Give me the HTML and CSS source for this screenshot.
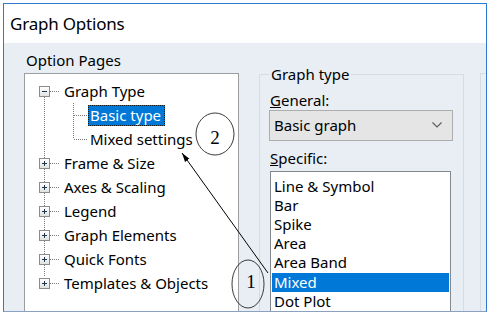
FILE: index.html
```html
<!DOCTYPE html>
<html lang="en">
<head>
  <meta charset="UTF-8" />
  <meta name="viewport" content="width=device-width, initial-scale=1.0" />
  <title>Graph Options</title>
  <link rel="stylesheet" href="styles.css">
</head>
<body>
  <div class="window">
    <div class="titlebar">Graph Options</div>
    <div class="content">
      <div class="pages">
        <p class="label">Option Pages</p>
        <div class="tree">
          <ul class="tree-root">
            <li>
              <div class="node"><span class="expander"></span><span class="dots"></span><span class="text">Graph Type</span></div>
              <ul class="tree-children">
                <li class="node"><span class="dots child"></span><span class="text selected">Basic type</span></li>
                <li class="node"><span class="dots child"></span><span class="text">Mixed settings</span></li>
              </ul>
            </li>
            <li class="node"><span class="expander closed"></span><span class="dots"></span><span class="text">Frame &amp; Size</span></li>
            <li class="node"><span class="expander closed"></span><span class="dots"></span><span class="text">Axes &amp; Scaling</span></li>
            <li class="node"><span class="expander closed"></span><span class="dots"></span><span class="text">Legend</span></li>
            <li class="node"><span class="expander closed"></span><span class="dots"></span><span class="text">Graph Elements</span></li>
            <li class="node"><span class="expander closed"></span><span class="dots"></span><span class="text">Quick Fonts</span></li>
            <li class="node"><span class="expander closed"></span><span class="dots"></span><span class="text">Templates &amp; Objects</span></li>
          </ul>
        </div>
      </div>

      <fieldset class="group">
        <legend>Graph type</legend>
        <p class="field-label"><u>G</u>eneral:</p>
        <div class="combo">
          <span>Basic graph</span>
          <svg class="chevron" width="10" height="6" viewBox="0 0 10 6">
            <path d="M0.5 0.5 L5 5 L9.5 0.5" fill="none" stroke="#5a5a5a" stroke-width="1.1"/>
          </svg>
        </div>
        <p class="field-label specific"><u>S</u>pecific:</p>
        <ul class="list">
          <li>Line &amp; Symbol</li>
          <li>Bar</li>
          <li>Spike</li>
          <li>Area</li>
          <li>Area Band</li>
          <li class="selected">Mixed</li>
          <li>Dot Plot</li>
        </ul>
      </fieldset>

      <div class="next-box"></div>
    </div>
  </div>

  <!-- annotations drawn on top of the dialog -->
  <svg class="notes" width="490" height="315" viewBox="0 0 490 315">
    <defs>
      <marker id="head" viewBox="0 0 10 10" refX="10" refY="5" markerWidth="9" markerHeight="9" orient="auto">
        <path d="M0 2 L10 5 L0 8 z" fill="#000"/>
      </marker>
    </defs>
    <line x1="268" y1="273" x2="182" y2="153" stroke="#000" stroke-width="1" marker-end="url(#head)"/>
    <ellipse cx="215" cy="134" rx="19" ry="21" fill="none" stroke="#3a3a3a" stroke-width="1"/>
    <text class="note-num" x="215" y="144" text-anchor="middle">2</text>
    <ellipse cx="248" cy="284" rx="16" ry="24" fill="none" stroke="#3a3a3a" stroke-width="1"/>
    <text class="note-num" x="251" y="288" text-anchor="middle">1</text>
  </svg>
</body>
</html>
```

FILE: styles.css
```css
:root {
  --rand: #2f7ad0;
  --hinten: #e9eef5;
  --auswahl: #0078d7;
  --linie: #7a7a7a;
}

* {
  box-sizing: border-box;
}

body {
  margin: 0;
  background: #fff;
  font-family: 'Noto Sans', 'Open Sans', sans-serif;
  font-size: 15px;
  color: #000;
}

p, ul {
  margin: 0;
  padding: 0;
  list-style: none;
}

.window {
  margin: 3px 3px 0 3px;
  height: 309px;
  border: 1px solid var(--rand);
  border-bottom-color: #8aa1c1;
  display: flex;
  flex-direction: column;
}

.titlebar {
  height: 39px;
  line-height: 39px;
  padding-left: 6px;
  font-size: 17px;
  letter-spacing: -0.2px;
  background: #fff;
}

.content {
  flex: 1;
  display: flex;
  background: var(--hinten);
  padding: 7px 0 0 20px;
  overflow: hidden;
}

/* linke Seite: Baum */
.pages {
  width: 215px;
  display: flex;
  flex-direction: column;
}

.label {
  margin: 0 0 3px 2px;
  line-height: 20px;
}

.tree {
  flex: 1;
  background: #fff;
  border: 1px solid #9a9da2;
  border-bottom: 0;
  padding-top: 5px;
}

.tree-root {
  padding-left: 14px;
  background: repeating-linear-gradient(to bottom, var(--linie) 0 1px, transparent 1px 2px) 19px 18px / 1px 180px no-repeat;
}

.tree-children {
  padding-left: 35px;
  background: repeating-linear-gradient(to bottom, var(--linie) 0 1px, transparent 1px 2px) 34px 0 / 1px 36px no-repeat;
}

.node {
  display: flex;
  align-items: center;
  height: 24px;
}

.expander {
  width: 11px;
  height: 11px;
  border: 1px solid #8c8c8c;
  background:
    linear-gradient(#1f3550, #1f3550) center / 5px 1px no-repeat,
    linear-gradient(#fff, #e2e2e2);
}

.expander.closed {
  background:
    linear-gradient(#1f3550, #1f3550) center / 5px 1px no-repeat,
    linear-gradient(#1f3550, #1f3550) center / 1px 5px no-repeat,
    linear-gradient(#fff, #e2e2e2);
}

.dots {
  width: 10px;
  height: 1px;
  margin-right: 2px;
  background: repeating-linear-gradient(to right, var(--linie) 0 1px, transparent 1px 2px);
}

.dots.child {
  width: 14px;
  margin-right: 0;
}

.text {
  line-height: 19px;
  padding: 0 1px;
  border: 1px solid transparent;
  white-space: nowrap;
}

.tree-children .text {
  padding: 0 3px 0 1px;
}

.text.selected {
  background: var(--auswahl);
  color: #fff;
  border: 1px dotted #1a1a1a;
}

/* rechte Seite: Gruppe */
.group {
  width: 205px;
  margin: 16px 0 0 20px;
  padding: 0 10px 0 9px;
  border: 1px solid #d6dce3;
  border-bottom: 0;
  display: flex;
  flex-direction: column;
  min-width: 0;
}

.group legend {
  padding: 0 2px;
  line-height: 16px;
}

.field-label {
  margin: 8px 0 0 1px;
  line-height: 20px;
}

.field-label.specific {
  margin-top: 7px;
}

.combo {
  width: 184px;
  height: 31px;
  border: 1px solid #adadad;
  background: #e5e5e5;
  display: flex;
  align-items: center;
  justify-content: space-between;
  padding: 0 10px 0 4px;
}

.list {
  flex: 1;
  width: 181px;
  margin: 3px 0 0 1px;
  padding-top: 5px;
  border: 1px solid #828790;
  border-bottom: 0;
  background: #fff;
}

.list li {
  line-height: 19.2px;
  height: 19.2px;
  margin: 0 1px;
  padding-left: 2px;
}

.list li.selected {
  background: var(--auswahl);
  color: #fff;
}

.next-box {
  flex: 1;
  margin: 23px 0 0 16px;
  border-left: 1px solid #d6dce3;
  border-top: 1px solid #d6dce3;
}

.notes {
  position: absolute;
  top: 0;
  left: 0;
  pointer-events: none;
}

.note-num {
  font-family: 'Liberation Serif', serif;
  font-size: 19px;
  fill: #000;
}
```
